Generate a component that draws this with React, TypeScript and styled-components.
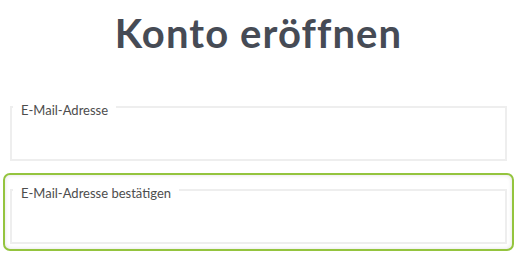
import React from "react";
import styled, { createGlobalStyle } from "styled-components";

const Global = createGlobalStyle`
  html, body { margin: 0; padding: 0; background: #fff; }
  body { font-family: "Lato", "Open Sans", sans-serif; }
`;

const Page = styled.div`
  width: 515px;
  height: 255px;
  overflow: hidden;
  box-sizing: border-box;
  padding: 0 1px 0 3px;
`;

const Title = styled.h1`
  margin: 0;
  padding-top: 9px;
  height: 90px;
  box-sizing: border-box;
  text-align: center;
  font-family: "Lato", sans-serif;
  font-weight: 700;
  font-size: 40px;
  line-height: 48px;
  color: #464b55;
  letter-spacing: 1.1px;
`;

const Form = styled.form`
  display: flex;
  flex-direction: column;
  gap: 5px;
`;

const FieldWrap = styled.div<{ $focused?: boolean }>`
  border: 2px solid ${(p) => (p.$focused ? "#94c43e" : "transparent")};
  border-radius: 7px;
  padding: 5px;
  box-shadow: ${(p) => (p.$focused ? "inset 0 0 4px rgba(0,0,0,0.12)" : "none")};
`;

const Fieldset = styled.fieldset`
  margin: 0;
  padding: 0 0 0 1px;
  border: 2px solid #eeeeee;
  height: 64px;
  box-sizing: border-box;
  display: flex;
`;

const Legend = styled.legend`
  padding: 6px 8px 0;
  font-family: "Lato", sans-serif;
  font-size: 13px;
  line-height: 14px;
  color: #4d4d4d;
`;

const Input = styled.input`
  flex: 1;
  border: none;
  outline: none;
  background: transparent;
  font-family: "Lato", sans-serif;
  font-size: 14px;
`;

export default function App() {
  return (
    <>
      <Global />
      <Page>
        <Title>Konto eröffnen</Title>
        <Form>
          <FieldWrap>
            <Fieldset>
              <Legend>E-Mail-Adresse</Legend>
              <Input type="email" />
            </Fieldset>
          </FieldWrap>
          <FieldWrap $focused>
            <Fieldset>
              <Legend>E-Mail-Adresse bestätigen</Legend>
              <Input type="email" />
            </Fieldset>
          </FieldWrap>
        </Form>
      </Page>
    </>
  );
}
